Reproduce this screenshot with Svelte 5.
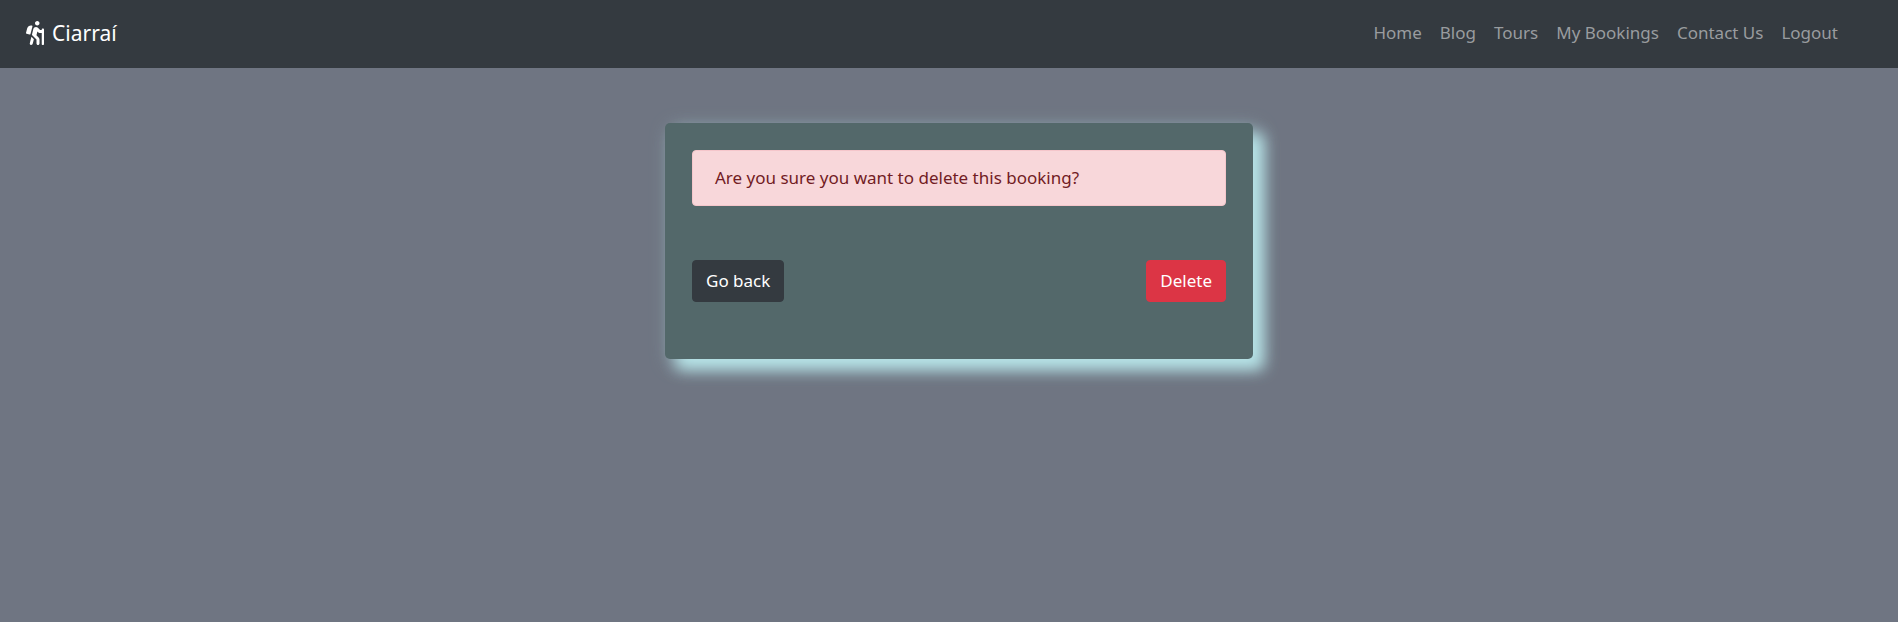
<script>
  const links = ['Home', 'Blog', 'Tours', 'My Bookings', 'Contact Us', 'Logout'];
</script>

<header class="navbar">
  <a class="brand" href="#home">
    <svg viewBox="0 0 384 512" aria-hidden="true">
      <path d="M80.95 472.23c-4.28 17.16 6.14 34.53 23.28 38.81 2.61.66 5.22.95 7.8.95 14.33 0 27.37-9.7 31.02-24.23l25.24-100.97-52.78-52.78-34.56 138.22zm14.89-196.12L137 117c2.19-8.42-3.14-16.95-11.92-19.06-43.88-10.52-88.35 15.07-99.32 57.17L.49 253.24c-2.19 8.42 3.14 16.95 11.92 19.06l63.56 15.25c8.79 2.1 17.68-3.02 19.87-11.44zM368 160h-16c-8.84 0-16 7.16-16 16v16h-34.75l-46.78-46.78C243.38 134.11 228.61 128 212.91 128c-27.02 0-50.47 18.3-57.03 44.52l-26.92 107.72a32.012 32.012 0 0 0 8.42 30.39L224 397.25V480c0 17.67 14.33 32 32 32s32-14.33 32-32v-82.75c0-17.09-6.66-33.16-18.75-45.25l-46.82-46.82c.15-.5.49-.89.62-1.41l19.89-79.57 22.43 22.43c6 6 14.14 9.38 22.62 9.38h48v240c0 8.84 7.16 16 16 16h16c8.84 0 16-7.16 16-16V176c.01-8.84-7.15-16-15.99-16zM240 96c26.51 0 48-21.49 48-48S266.51 0 240 0s-48 21.49-48 48 21.49 48 48 48z" />
    </svg>
    <span>Ciarraí</span>
  </a>
  <nav>
    {#each links as link}
      <a href="#{link.toLowerCase().replace(' ', '-')}">{link}</a>
    {/each}
  </nav>
</header>

<main>
  <section class="card">
    <div class="alert" role="alert">Are you sure you want to delete this booking?</div>
    <div class="actions">
      <button type="button" class="dark">Go back</button>
      <button type="button" class="danger">Delete</button>
    </div>
  </section>
</main>

<style>
  :global(body) {
    margin: 0;
    background: #6f7582;
    font-family: 'Segoe UI', 'Noto Sans', 'Open Sans', sans-serif;
    font-size: 17px;
    line-height: 26px;
  }

  .navbar {
    display: flex;
    align-items: center;
    justify-content: space-between;
    box-sizing: border-box;
    min-height: 68px;
    padding: 0 51px 2px 26px;
    background: #343a40;
  }

  .brand {
    display: flex;
    align-items: center;
    gap: 8px;
    color: #fff;
    font-size: 21px;
    text-decoration: none;
  }

  .brand svg {
    width: 18px;
    height: 24px;
    fill: currentColor;
  }

  nav {
    display: flex;
  }

  nav a {
    padding: 9px;
    color: #999c9f;
    text-decoration: none;
  }

  main {
    display: flex;
    justify-content: center;
    padding: 55px 0 55px 20px;
  }

  .card {
    box-sizing: border-box;
    width: calc(100% / 3 - 38px);
    min-width: 340px;
    padding: 27px 27px 57px;
    border-radius: 5px;
    background: #53686a;
    box-shadow: 11px 11px 15px #b7e4e8, 5px 5px 20px rgba(183, 228, 232, 0.4);
  }

  .alert {
    padding: 14px 22px;
    border: 1px solid #f5c6cb;
    border-radius: 4px;
    background: #f8d7da;
    color: #721c24;
  }

  .actions {
    display: flex;
    justify-content: space-between;
    margin-top: 54px;
  }

  button {
    padding: 7px 13px;
    border: 1px solid transparent;
    border-radius: 4px;
    color: #fff;
    font: inherit;
    cursor: pointer;
  }

  .dark {
    border-color: #343a40;
    background: #343a40;
  }

  .danger {
    border-color: #dc3545;
    background: #dc3545;
  }
</style>
